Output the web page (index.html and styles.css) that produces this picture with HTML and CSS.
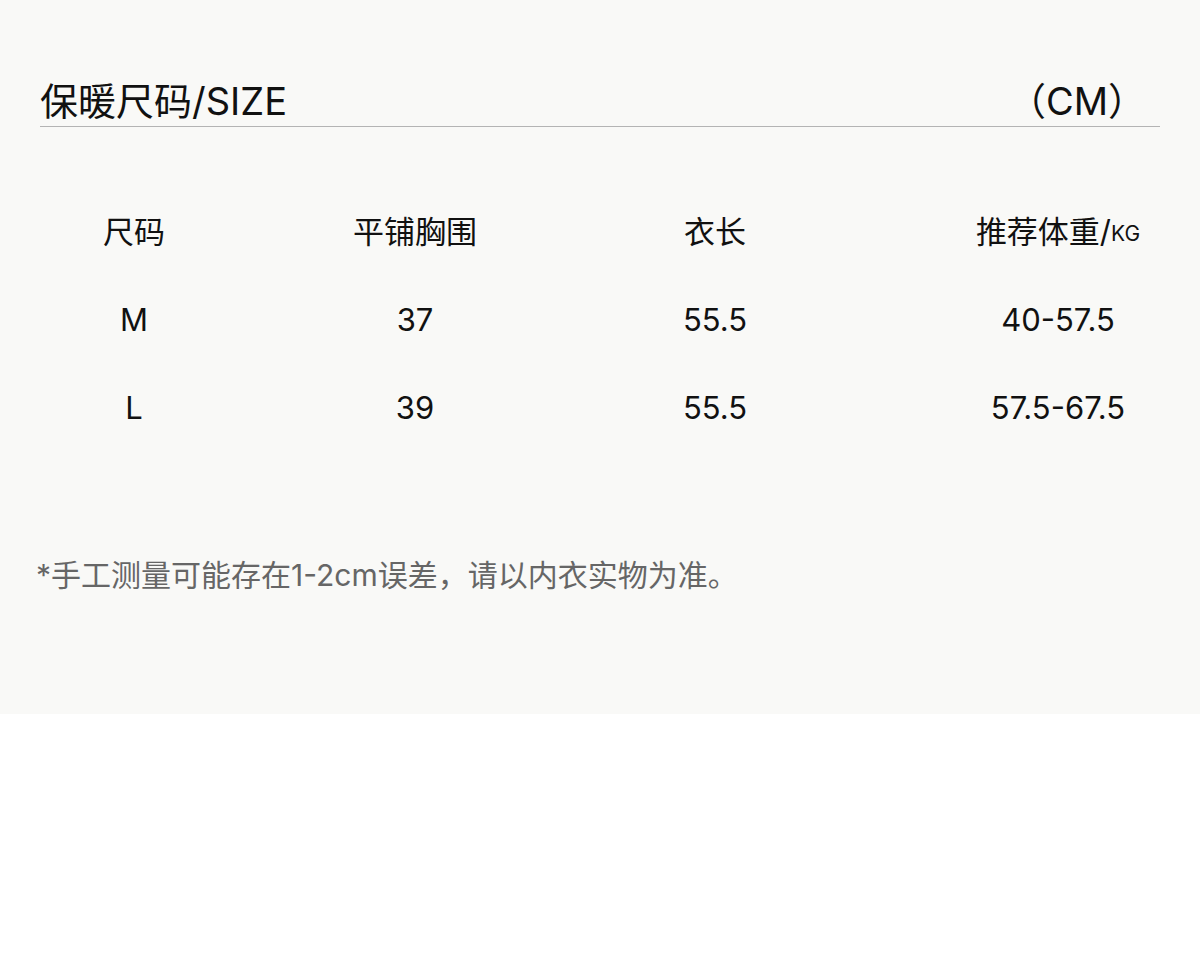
FILE: index.html
```html
<!DOCTYPE html>
<html lang="zh-CN">
<head>
<meta charset="utf-8">
<title>保暖尺码/SIZE</title>
<link rel="stylesheet" href="styles.css">
</head>
<body>
<section class="panel">
  <header class="title-bar">
    <h1 class="title">保暖尺码/SIZE</h1>
    <span class="unit">（CM）</span>
  </header>
  <div class="size-table">
    <div class="cell head">尺码</div>
    <div class="cell head">平铺胸围</div>
    <div class="cell head">衣长</div>
    <div class="cell head last">推荐体重/<span class="kg">KG</span></div>

    <div class="cell">M</div>
    <div class="cell">37</div>
    <div class="cell">55.5</div>
    <div class="cell last">40-57.5</div>

    <div class="cell">L</div>
    <div class="cell">39</div>
    <div class="cell">55.5</div>
    <div class="cell last">57.5-67.5</div>
  </div>
  <p class="note">*手工测量可能存在1-2cm误差，请以内衣实物为准。</p>
</section>
</body>
</html>
```

FILE: styles.css
```css
html, body {
  margin: 0;
  padding: 0;
  background: #ffffff;
}

body {
  font-family: Inter, "Noto Sans CJK SC", sans-serif;
  color: #111111;
}

.panel {
  background: #f9f9f7;
  height: 714px;
  box-sizing: border-box;
  padding-top: 76px;
}

.title-bar {
  display: flex;
  justify-content: space-between;
  align-items: flex-end;
  margin: 0 40px 0 40px;
  padding: 0 14px 0 0;
  border-bottom: 1px solid #b4b4b4;
  height: 50px;
}

.title {
  margin: 0;
  font-size: 38px;
  font-weight: 400;
  line-height: 50px;
  letter-spacing: 0;
}

.unit {
  font-size: 38px;
  line-height: 50px;
}

.size-table {
  display: grid;
  grid-template-columns: 200px 362px 238px 1fr;
  grid-auto-rows: 88px;
  padding: 0 42px 0 34px;
  margin-top: 60px;
}

.cell {
  display: flex;
  align-items: center;
  justify-content: center;
  font-size: 31px;
  line-height: 1;
}

.cell.head {
  font-size: 31px;
}

.cell.last {
  justify-self: end;
  width: 200px;
  white-space: nowrap;
}

.kg {
  font-size: 21px;
  align-self: center;
  margin-top: 4px;
}

.note {
  margin: 104px 0 0 36px;
  font-size: 30px;
  line-height: 40px;
  color: #666666;
}
```
